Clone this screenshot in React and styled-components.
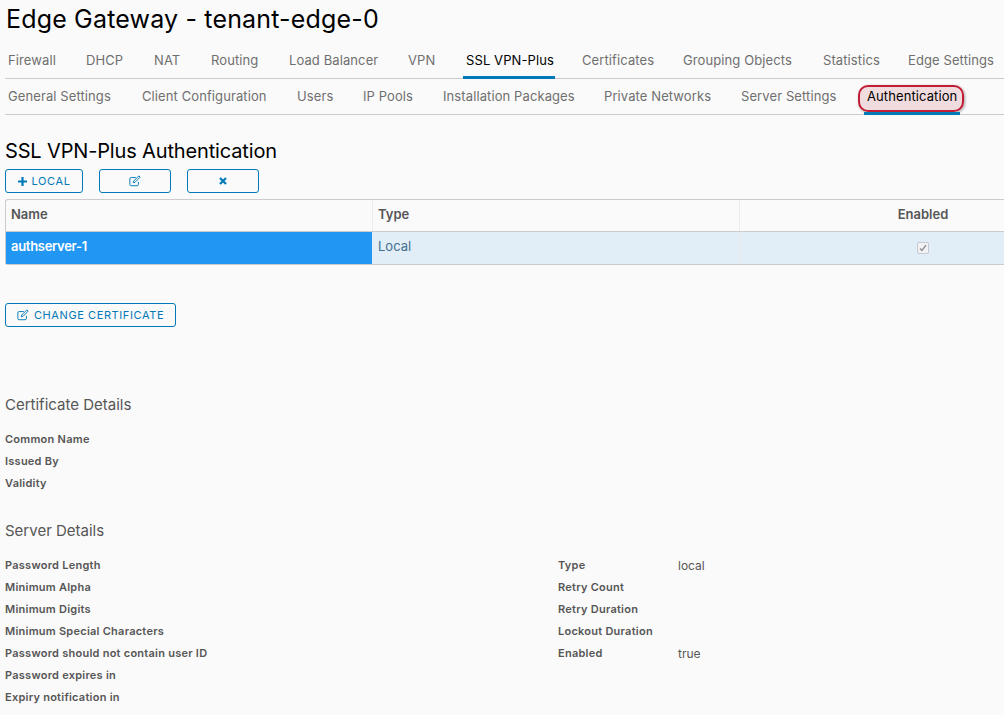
import React from "react";
import styled, { createGlobalStyle } from "styled-components";

const Global = createGlobalStyle`
  html, body { margin: 0; padding: 0; background: #fafafa; }
  body { font-family: Inter, "Open Sans", sans-serif; color: #565656; overflow: hidden; }
  * { box-sizing: border-box; }
`;

const Page = styled.div`
  width: 1004px;
  height: 715px;
  overflow: hidden;
  padding: 0 0 0 5px;
  display: flex;
  flex-direction: column;
`;

const Title = styled.h1`
  margin: 0;
  height: 41px;
  padding: 3px 0 0 1px;
  font-size: 25px;
  line-height: 32px;
  font-weight: 400;
  color: #000;
  letter-spacing: 0.17px;
  white-space: nowrap;
`;

const TabBar = styled.nav`
  display: flex;
  height: ${(p) => p.$h}px;
  border-bottom: 1px solid #cccccc;
  padding-left: 3px;
  gap: ${(p) => p.$gap}px;
  align-items: stretch;
`;

const Tab = styled.div`
  position: relative;
  display: flex;
  align-items: center;
  height: 100%;
  width: ${(p) => p.$w}px;
  padding-bottom: ${(p) => p.$pb}px;
  font-size: 13px;
  letter-spacing: 0.1px;
  color: ${(p) => (p.$active ? "#000" : "#6f6f6f")};
  white-space: nowrap;
  &::after {
    content: "";
    display: ${(p) => (p.$active ? "block" : "none")};
    position: absolute;
    left: -3px;
    right: -3px;
    bottom: -1px;
    height: 3px;
    background: #0079b8;
  }
`;

const Highlight = styled.span`
  position: absolute;
  left: -9px;
  top: 6px;
  width: 106px;
  height: 27px;
  border: 2px solid #c21d35;
  border-radius: 10px;
  background: rgba(190, 60, 80, 0.16);
  box-shadow: 1px 1px 3px rgba(0, 0, 0, 0.35);
`;

const TabText = styled.span`
  position: relative;
`;

const SectionTitle = styled.h2`
  margin: 0;
  padding-top: 24px;
  height: 54px;
  font-size: 20px;
  line-height: 24px;
  font-weight: 400;
  letter-spacing: -0.15px;
  color: #000;
  white-space: nowrap;
`;

const Toolbar = styled.div`
  display: flex;
  gap: 16px;
  height: 24px;
`;

const Button = styled.button`
  display: inline-flex;
  align-items: center;
  justify-content: center;
  gap: 5px;
  width: ${(p) => p.$w}px;
  height: 24px;
  padding: 0;
  background: transparent;
  border: 1px solid #0079b8;
  border-radius: 3px;
  color: #0079b8;
  font-family: inherit;
  font-size: 11px;
  letter-spacing: 0.6px;
  white-space: nowrap;
`;

const Table = styled.div`
  margin-top: 6px;
  height: 66px;
  width: 1101px;
  flex: none;
  border-top: 1px solid #cccccc;
  border-bottom: 1px solid #cccccc;
  border-left: 1px solid #cccccc;
  border-radius: 3px 0 0 3px;
  background: #fafafa;
  display: flex;
  flex-direction: column;
`;

const Row = styled.div`
  display: grid;
  grid-template-columns: 366px 367px 1fr;
  height: ${(p) => p.$h}px;
  border-bottom: ${(p) => (p.$head ? "1px solid #cccccc" : "none")};
  background: ${(p) => (p.$selected ? "#e1edf7" : "transparent")};
`;

const Cell = styled.div`
  display: flex;
  align-items: center;
  justify-content: ${(p) => (p.$center ? "center" : "flex-start")};
  padding: ${(p) => (p.$center ? "0" : p.$body ? "0 6px" : "0 5px")};
  padding-bottom: 4px;
  font-size: 13px;
  font-weight: ${(p) => (p.$head || p.$selected ? 600 : 400)};
  letter-spacing: ${(p) => (p.$selected ? "-0.3px" : "0")};
  color: ${(p) => (p.$selected ? "#fff" : p.$head ? "#565656" : "#44708f")};
  background: ${(p) => (p.$selected ? "#2196f3" : "transparent")};
  border-left: ${(p) => (p.$divider ? "1px solid #ececec" : "none")};
`;

const CheckBox = styled.span`
  width: 12px;
  height: 12px;
  display: inline-flex;
  align-items: center;
  justify-content: center;
  border: 1px solid #c6c9cf;
  border-radius: 2px;
  background: #f1f2f4;
  margin-top: 4px;
`;

const CertAction = styled.div`
  margin-top: 38px;
`;

const Heading = styled.h3`
  margin: 0;
  font-size: 15px;
  line-height: 20px;
  font-weight: 400;
  color: #565656;
  white-space: nowrap;
`;

const CertHeading = styled(Heading)`
  margin-top: 68px;
`;

const ServerHeading = styled(Heading)`
  margin-top: 27px;
`;

const Details = styled.div`
  margin-top: 13px;
  display: grid;
  grid-template-columns: 553px 120px 1fr;
  grid-auto-rows: 22px;
  align-items: center;
`;

const Label = styled.div`
  font-size: 11px;
  font-weight: 600;
  letter-spacing: 0.25px;
  color: #565656;
  white-space: nowrap;
  grid-column: ${(p) => p.$col || "auto"};
`;

const Value = styled.div`
  font-size: 12px;
  color: #565656;
`;

const EditIcon = ({ size = 12 }) => (
  <svg width={size} height={size} viewBox="0 0 14 14" fill="none" stroke="currentColor" strokeWidth="1.1">
    <path d="M11 8v3a1.5 1.5 0 0 1-1.5 1.5h-7A1.5 1.5 0 0 1 1 11V4.5A1.5 1.5 0 0 1 2.500 3H8" />
    <path d="M5.500 7 11.500 1 13 2.500 7 8.500 5 9z" />
  </svg>
);

const PlusIcon = () => (
  <svg width="9" height="9" viewBox="0 0 9 9" fill="currentColor">
    <path d="M3.400 0h2.200v3.400H9v2.200H5.600V9H3.400V5.600H0V3.400h3.400z" />
  </svg>
);

const CloseIcon = () => (
  <svg width="8" height="8" viewBox="0 0 8 8" fill="none" stroke="currentColor" strokeWidth="2.2">
    <path d="M1 1l6 6M7 1L1 7" />
  </svg>
);

const mainTabs = [
  ["Firewall", 48],
  ["DHCP", 38],
  ["NAT", 27],
  ["Routing", 48],
  ["Load Balancer", 89],
  ["VPN", 28],
  ["SSL VPN-Plus", 86, true],
  ["Certificates", 71],
  ["Grouping Objects", 110],
  ["Statistics", 55],
  ["Edge Settings", 87],
];

const subTabs = [
  ["General Settings", 104],
  ["Client Configuration", 125],
  ["Users", 36],
  ["IP Pools", 50],
  ["Installation Packages", 131],
  ["Private Networks", 107],
  ["Server Settings", 96],
  ["Authentication", 90, true],
];

const serverRows = [
  ["Password Length", "Type", "local"],
  ["Minimum Alpha", "Retry Count"],
  ["Minimum Digits", "Retry Duration"],
  ["Minimum Special Characters", "Lockout Duration"],
  ["Password should not contain user ID", "Enabled", "true"],
  ["Password expires in"],
  ["Expiry notification in"],
];

export default function App() {
  return (
    <Page>
      <Global />
      <Title>Edge Gateway - tenant-edge-0</Title>
      <TabBar $h={38} $gap={30}>
        {mainTabs.map(([t, w, a]) => (
          <Tab key={t} $w={w} $pb={0} $active={a}>{t}</Tab>
        ))}
      </TabBar>
      <TabBar $h={36} $gap={30}>
        {subTabs.map(([t, w, a]) => (
          <Tab key={t} $w={w} $pb={2} $active={a}>
            {a && <Highlight />}
            <TabText>{t}</TabText>
          </Tab>
        ))}
      </TabBar>
      <SectionTitle>SSL VPN-Plus Authentication</SectionTitle>
      <Toolbar>
        <Button $w={78}><PlusIcon /> LOCAL</Button>
        <Button $w={72}><EditIcon /></Button>
        <Button $w={72}><CloseIcon /></Button>
      </Toolbar>
      <Table>
        <Row $h={32} $head>
          <Cell $head>Name</Cell>
          <Cell $head $divider>Type</Cell>
          <Cell $head $divider $center>Enabled</Cell>
        </Row>
        <Row $h={32} $selected>
          <Cell $selected>authserver-1</Cell>
          <Cell $body>Local</Cell>
          <Cell $divider $center>
            <CheckBox>
              <svg width="8" height="8" viewBox="0 0 8 8" fill="none" stroke="#8a8d93" strokeWidth="1.4">
                <path d="M1 4.500 3 6.500 7 1.200" />
              </svg>
            </CheckBox>
          </Cell>
        </Row>
      </Table>
      <CertAction>
        <Button $w={171}><EditIcon /> CHANGE CERTIFICATE</Button>
      </CertAction>
      <CertHeading>Certificate Details</CertHeading>
      <Details>
        <Label>Common Name</Label>
        <Label $col="1">Issued By</Label>
        <Label $col="1">Validity</Label>
      </Details>
      <ServerHeading>Server Details</ServerHeading>
      <Details>
        {serverRows.map(([a, b, c]) => (
          <React.Fragment key={a}>
            <Label $col="1">{a}</Label>
            {b && <Label>{b}</Label>}
            {c && <Value>{c}</Value>}
          </React.Fragment>
        ))}
      </Details>
    </Page>
  );
}
